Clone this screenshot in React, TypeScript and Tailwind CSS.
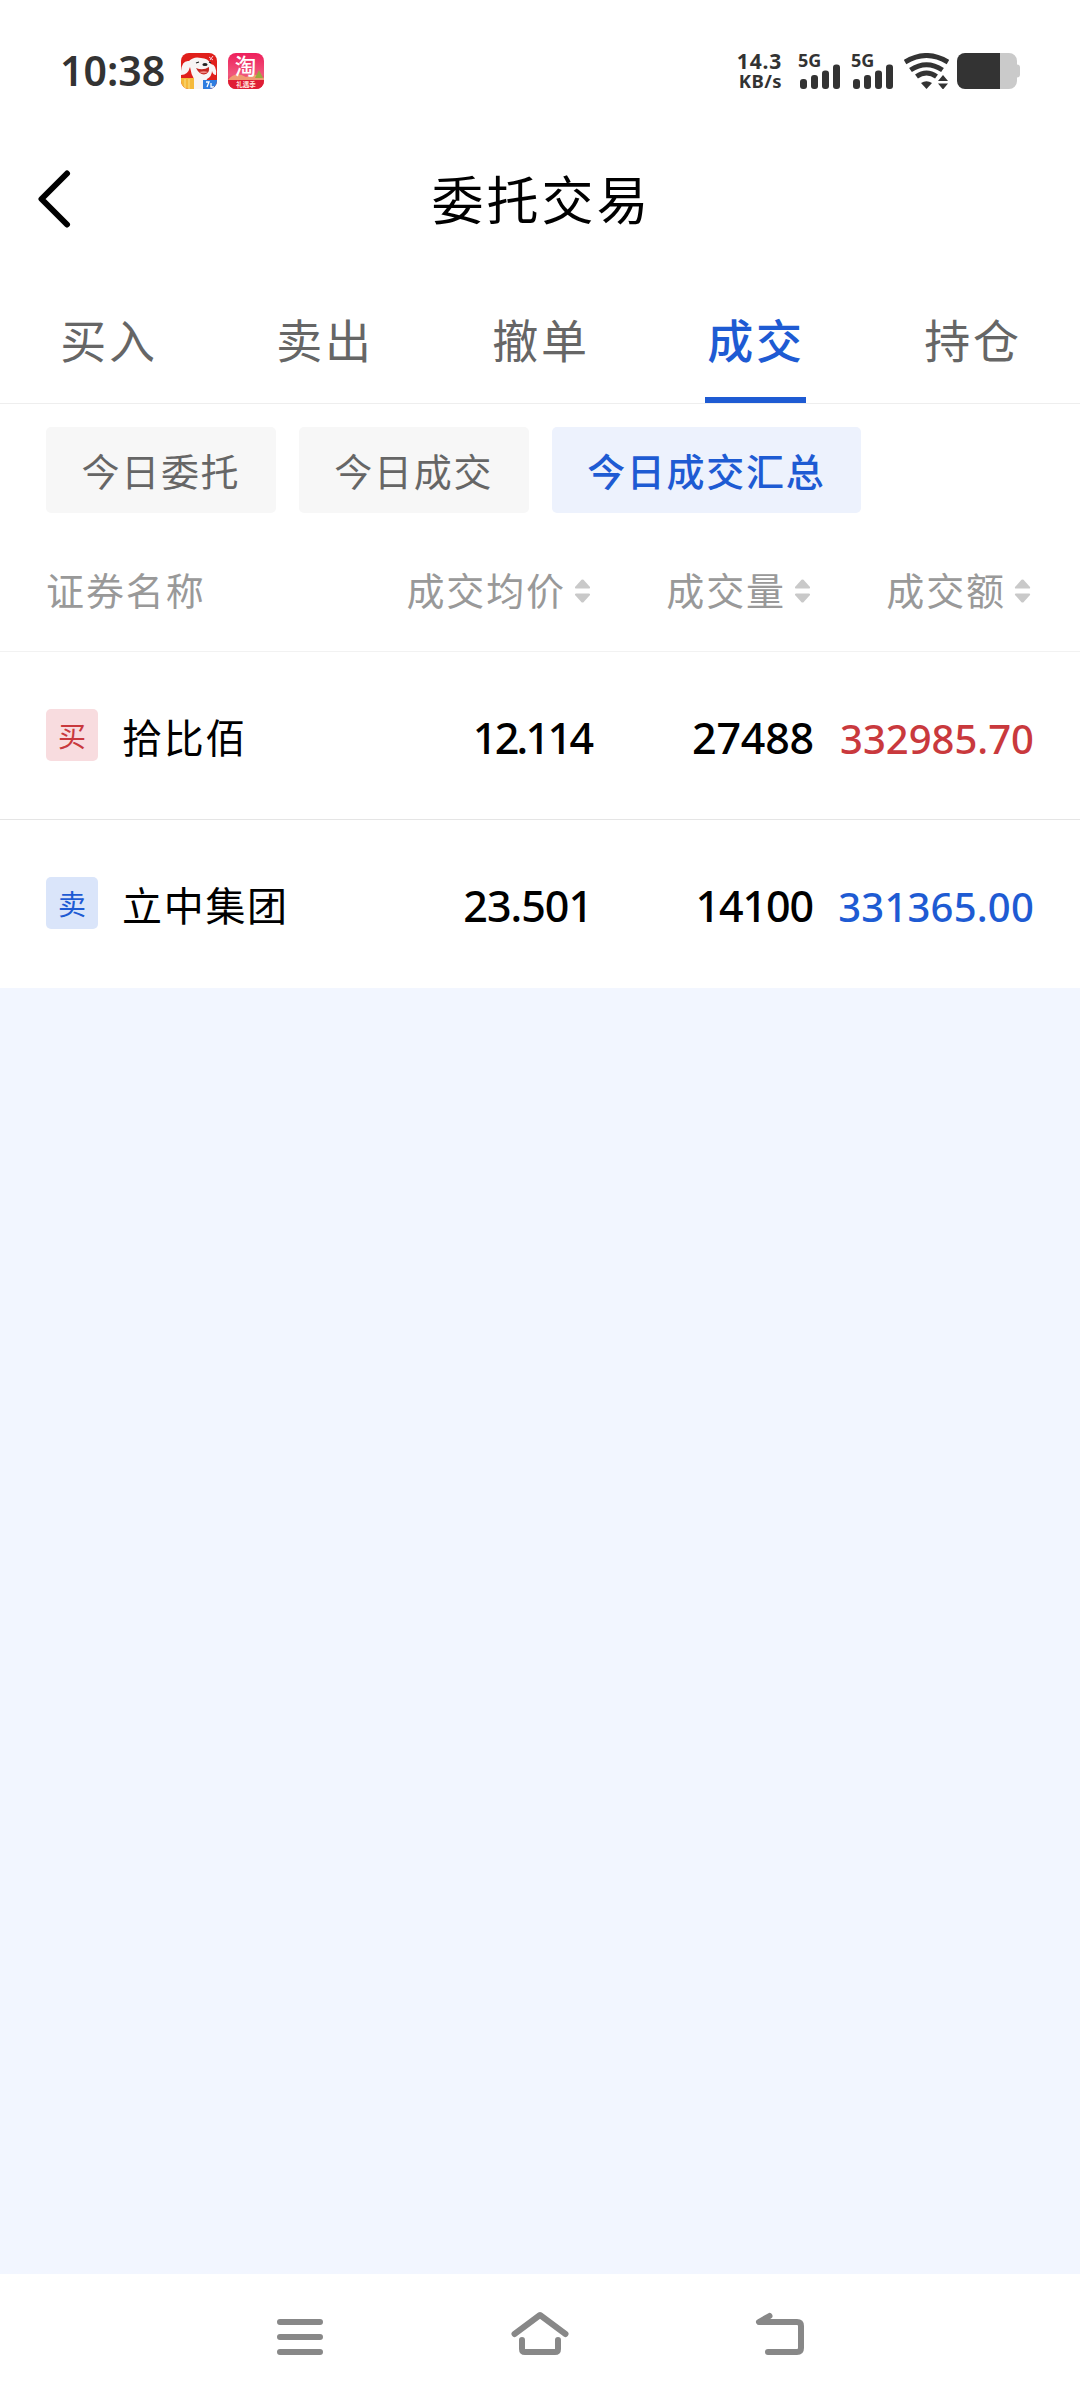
import clsx from "clsx";

const tabs = ["买入", "卖出", "撤单", "成交", "持仓"];
const filters = ["今日委托", "今日成交", "今日成交汇总"];
const columns = ["成交均价", "成交量", "成交额"];

const trades = [
  {
    side: "买",
    name: "拾比佰",
    price: "12.114",
    priceClass: "tracking-[-2.700px] mr-[2.700px]",
    volume: "27488",
    volumeClass: "tracking-[-0.200px]",
    amount: "332985.70",
    amountClass: "tracking-normal",
  },
  {
    side: "卖",
    name: "立中集团",
    price: "23.501",
    priceClass: "tracking-[-1px] mr-[2px]",
    volume: "14100",
    volumeClass: "tracking-[-1.100px] mr-[1px]",
    amount: "331365.00",
    amountClass: "tracking-[0.200px]",
  },
];

const cjk = "font-['Noto_Sans_CJK_SC',sans-serif]";
const latin = "font-['Noto_Sans','Noto_Sans_CJK_SC',sans-serif]";

function JdIcon() {
  return (
    <svg className="h-9 w-9" viewBox="0 0 36 36">
      <clipPath id="jd">
        <rect width="36" height="36" rx="8" />
      </clipPath>
      <g clipPath="url(#jd)">
        <rect width="36" height="36" fill="#e01f1b" />
        <path d="M0 18Q1 7 8 8Q13 3 20 5Q27 5 30 11Q36 12 35 22Q32 22 31 18Q31 23 26 26L22 36H11L13 26Q10 21 9 14Q7 22 0 22Z" fill="#f8f4f4" />
        <path d="M15 15Q22 18 28 14Q29 21 23 21.500Q18 21 15 15Z" fill="#c5251f" />
        <path d="M18 19Q23 17.500 27 19Q23 21.500 18 19Z" fill="#f08b85" />
        <ellipse cx="24" cy="11.500" rx="2.600" ry="1.500" fill="#222" />
        <path d="M15 10l3-1M28 9l2 1" stroke="#222" strokeWidth="1.200" />
        <rect y="25" width="13" height="11" fill="#f5b93b" />
        <path d="M4 26v10M8 26v10" stroke="#fbe08a" strokeWidth="1" />
        <rect x="22" y="27" width="14" height="9" fill="#2f7de0" />
        <path d="M25 29h3l-2 5M30 30v4h3" stroke="#fff" strokeWidth="1.300" fill="none" />
        <path d="M28 4l4 3M32 3l-3 4" stroke="#f7cfe0" strokeWidth="1" />
      </g>
    </svg>
  );
}

function TaobaoIcon() {
  return (
    <svg className="h-9 w-9" viewBox="0 0 36 36">
      <defs>
        <clipPath id="tb">
          <rect width="36" height="36" rx="8" />
        </clipPath>
        <linearGradient id="tbBg" x1="0" y1="0" x2="0" y2="1">
          <stop offset="0" stopColor="#ee1f5b" />
          <stop offset="0.6" stopColor="#f0577c" />
          <stop offset="1" stopColor="#e0203d" />
        </linearGradient>
      </defs>
      <g clipPath="url(#tb)">
        <rect width="36" height="36" fill="url(#tbBg)" />
        <path d="M0 27Q7 18 18 24Q28 19 36 25V30H0Z" fill="#f09a72" />
        <path d="M31 17l4 8h-8Z" fill="#9aa83e" />
        <rect y="27" width="36" height="9" fill="#df1d35" />
      </g>
      <text x="17.500" y="20.500" textAnchor="middle" fontSize="21.500" fontWeight="500" fill="#fff" className={cjk}>淘</text>
      <text x="18" y="34" textAnchor="middle" fontSize="6.500" fontWeight="700" fill="#ffe3dc" className={cjk}>礼遇季</text>
    </svg>
  );
}

function Signal() {
  return (
    <div className="relative h-9 w-[43px]">
      <span className="absolute -top-[2px] left-0 text-[18px] leading-[18px] font-bold">5G</span>
      <svg className="h-9 w-[43px]" viewBox="0 0 43 36" fill="currentColor">
        <rect x="2" y="26" width="7" height="10" rx="3" />
        <rect x="13" y="22" width="7" height="14" rx="3" />
        <rect x="24" y="17.500" width="7" height="18.500" rx="3" />
        <rect x="35" y="11.500" width="7" height="24.500" rx="3" />
      </svg>
    </div>
  );
}

function StatusBar() {
  return (
    <div className={clsx("flex h-[142px] items-start pt-[53px] pr-[60px] pl-[60px] text-[#333333]", latin)}>
      <span className="w-[121px] text-[41px] leading-[35px] font-semibold">10:38</span>
      <JdIcon />
      <span className="w-[11px]" />
      <TaobaoIcon />
      <div className="ml-auto flex">
        <div className="-mt-[2px] mr-[16px] flex w-[45px] flex-col items-end font-bold">
          <span className="text-[21px] leading-[20px] tracking-[0.8px]">14.3</span>
          <span className="text-[18.500px] leading-[20px] tracking-[0.4px]">KB/s</span>
        </div>
        <Signal />
        <span className="w-[10px]" />
        <Signal />
        <svg className="ml-[10px] h-9 w-[45px]" viewBox="0 0 45 36" fill="none" stroke="currentColor" strokeWidth="5">
          <path d="M1 9Q22.500 -4 44 9" />
          <path d="M6.500 17Q22.500 6.500 38.500 17" />
          <path d="M12.500 23.500Q22.500 16.500 32.500 23.500" />
          <path d="M17 30Q22.500 26.500 28 30L22.500 36Z" fill="currentColor" stroke="none" />
          <path d="M34 28l5-6 5 6ZM34 30.500h10l-5 6Z" fill="currentColor" stroke="none" />
        </svg>
        <svg className="ml-[8px] h-9 w-[63px]" viewBox="0 0 63 36">
          <path d="M43 0h9a8 8 0 0 1 8 8v3.500q3 0 3 3v7q0 3-3 3V28a8 8 0 0 1-8 8h-9Z" fill="#cacaca" />
          <path d="M43 0H8a8 8 0 0 0-8 8v20a8 8 0 0 0 8 8h35Z" fill="#333" />
        </svg>
      </div>
    </div>
  );
}

function SortArrows() {
  return (
    <svg className="mt-[4px] mr-[1px] ml-[8px] h-6 w-[17px]" viewBox="0 0 17 24" fill="#c9c9c9">
      <path d="M7.500 0.800Q8.500 0 9.500 0.800L16 8Q16.500 9.500 15 9.500H2Q0.500 9.500 1 8Z" />
      <path d="M7.500 23.200Q8.500 24 9.500 23.200L16 16Q16.500 14.500 15 14.500H2Q0.500 14.500 1 16Z" />
    </svg>
  );
}

export default function App() {
  return (
    <div lang="zh-CN" className={clsx("flex h-[2400px] w-[1080px] flex-col bg-[#f2f6ff] text-black", cjk)}>
      <div className="bg-white">
        <StatusBar />

        <header className="relative flex h-[114px] items-center justify-center">
          <svg className="absolute top-[28px] left-[37px] h-[58px] w-[34px]" viewBox="0 0 34 58" fill="none" stroke="#000" strokeWidth="6" strokeLinecap="round" strokeLinejoin="round">
            <path d="M30 3.500L4.500 29L30 54.500" />
          </svg>
          <h1 className="pb-[2px] pl-[3px] text-[52px] leading-[52px] tracking-[3px]">委托交易</h1>
        </header>

        <nav className="grid h-[148px] grid-cols-5 border-b border-[#eeeeee]">
          {tabs.map((tab) => (
            <div key={tab} className="flex justify-center">
              <span
                className={clsx(
                  "flex h-[147px] w-[101px] justify-center border-b-[6px] pt-[57px] text-[46px] leading-[50px] tracking-[2.800px] whitespace-nowrap",
                  tab === "成交" ? "-ml-[2px] border-[#1e5bd3] pl-[2px] font-medium text-[#1e5bd3]" : "border-transparent pl-[2px] text-[#666666]"
                )}
              >
                {tab}
              </span>
            </div>
          ))}
        </nav>

        <div className="flex gap-[23px] px-[46px] pt-[23px]">
          {filters.map((filter, i) => (
            <button
              key={filter}
              className={clsx(
                "h-[86px] rounded-[5px] px-[35.500px] text-[38px] leading-[86px] tracking-[1.700px]",
                i === 2 ? "bg-[#edf2fd] font-medium text-[#1e5bd3]" : "bg-[#f7f7f7] text-[#666666]"
              )}
            >
              {filter}
            </button>
          ))}
        </div>

        <div className="grid h-[139px] grid-cols-[327px_219px_220px_220px] items-center border-b border-[#f2f2f2] pt-[14px] pl-[46px] text-[38px] leading-[40px] tracking-[1.900px] text-[#999999]">
          <span>证券名称</span>
          {columns.map((column) => (
            <span key={column} className="flex items-center justify-end">
              {column}
              <SortArrows />
            </span>
          ))}
        </div>

        {trades.map((trade) => {
          const buy = trade.side === "买";
          return (
            <div
              key={trade.name}
              className="grid h-[168px] grid-cols-[328px_220px_220px_220px] items-center border-b border-[#e5e5e5] pl-[46px] last:border-transparent"
            >
              <div className="flex items-start">
                <span
                  className={clsx(
                    "-mt-[1px] h-[52px] w-[52px] rounded-[5px] text-center text-[28px] leading-[52px]",
                    buy ? "bg-[#f8dcdf] text-[#c9393d]" : "bg-[#dae5fa] text-[#1e5bd3]"
                  )}
                >
                  {trade.side}
                </span>
                <span className="ml-[24px] text-[40px] leading-[52px] tracking-[1.700px]">{trade.name}</span>
              </div>
              <span className={clsx("pt-[5px] text-right text-[43px] font-medium", latin, trade.priceClass)}>{trade.price}</span>
              <span className={clsx("pt-[5px] text-right text-[43px] font-medium", latin, trade.volumeClass)}>{trade.volume}</span>
              <span
                className={clsx(
                  "pt-[6px] text-right text-[40px] font-medium",
                  latin,
                  trade.amountClass,
                  buy ? "text-[#c9393d]" : "text-[#1e5bd3]"
                )}
              >
                {trade.amount}
              </span>
            </div>
          );
        })}
      </div>

      <footer className="mt-auto flex h-[126px] items-start justify-center gap-[180px] bg-white pt-[32px] text-[#888888]">
        <svg className="h-[60px] w-[60px]" viewBox="270 2306 60 60" fill="none" stroke="currentColor" strokeWidth="6" strokeLinecap="round">
          <path d="M280 2322H320M280 2337H320M280 2352H320" />
        </svg>
        <svg className="h-[60px] w-[60px]" viewBox="510 2306 60 60" fill="none" stroke="currentColor" strokeWidth="6" strokeLinecap="round" strokeLinejoin="round">
          <path d="M514.500 2334L540 2315L565.500 2334" />
          <path d="M522 2340V2349Q522 2352 525 2352H555Q558 2352 558 2349V2340" />
        </svg>
        <svg className="h-[60px] w-[60px]" viewBox="750 2306 60 60" fill="none" stroke="currentColor" strokeWidth="6" strokeLinecap="round" strokeLinejoin="round">
          <path d="M769.500 2316L759 2322H797Q801 2322 801 2326V2348Q801 2352 797 2352H768" />
        </svg>
      </footer>
    </div>
  );
}
